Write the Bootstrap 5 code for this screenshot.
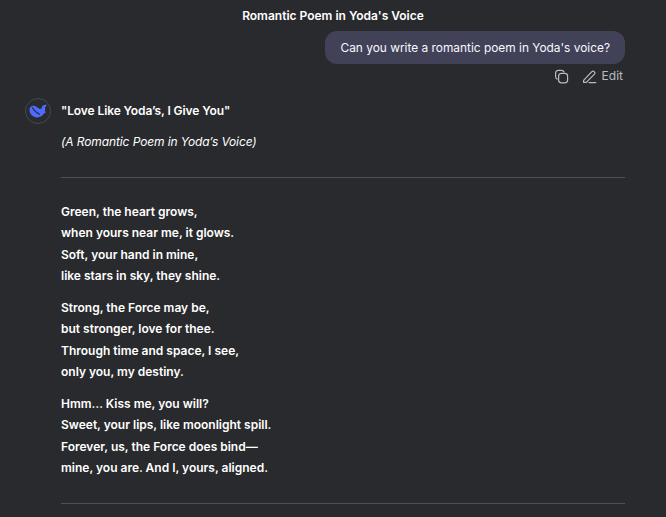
<!DOCTYPE html>
<html lang="en">
<head>
<meta charset="utf-8">
<title>Romantic Poem in Yoda's Voice</title>
<link rel="stylesheet" href="https://cdn.jsdelivr.net/npm/bootstrap@5.3.0/dist/css/bootstrap.min.css">
<style>
html, body { height: 100%; overflow: hidden; }
body { background: #292a2d; color: #f8faff; font-family: Inter, "Liberation Sans", sans-serif; font-size: 12px; }
.shell { width: 666px; height: 517px; overflow: hidden; padding: 0 41px 0 25px; }
.chat-title { height: 31px; margin-right: -16px; font-size: 12px; font-weight: 600; color: #fff; }
.user-bubble { background: #414158; border-radius: 12px; height: 33px; padding: 0 15px; font-size: 11.9px; color: #f8faff; }
.msg-actions { height: 24px; padding-right: 2px; color: #b9bbc0; font-size: 12px; gap: 13px; }
.edit-action { gap: 5px; }
.avatar { width: 26px; height: 26px; border: 1px solid #44484f; border-radius: 50%; flex: none; margin-top: 10px; }
.answer { margin-left: 10px; padding-top: 12px; }
.answer p { margin: 0; line-height: 21.5px; font-weight: 600; color: #fff; }
.answer .poem-title { height: 21px; margin-bottom: 10px; letter-spacing: -0.1px; }
.answer .subtitle { font-weight: 400; font-style: italic; letter-spacing: -0.1px; }
.answer .stanza { margin-bottom: 10px; }
.rule-line { border: 0; border-top: 1px solid #4e5055; opacity: 1; margin: 0; }
.rule-a { margin-top: 24px; margin-bottom: 23px; }
.rule-b { margin-top: 24px; }
</style>
</head>
<body>
<div class="shell">
  <div class="chat-title d-flex align-items-center justify-content-center">Romantic Poem in Yoda's Voice</div>
  <div class="d-flex justify-content-end">
    <div class="user-bubble d-flex align-items-center">Can you write a romantic poem in Yoda's voice?</div>
  </div>
  <div class="msg-actions d-flex justify-content-end align-items-center">
    <svg width="15" height="15" viewBox="0 0 15 15" fill="none" stroke="#b9bbc0" stroke-width="1.2" aria-hidden="true"><path d="M3.6 10.2A3 3 0 0 1 1.6 7.4V4a2.6 2.6 0 0 1 2.6-2.6h3.3a3 3 0 0 1 2.7 1.9"/><rect x="4.6" y="4.4" width="9" height="9.4" rx="2.8"/></svg>
    <span class="edit-action d-flex align-items-center">
      <svg width="15" height="15" viewBox="0 0 15 15" fill="none" stroke="#b9bbc0" stroke-width="1.2" stroke-linejoin="round" stroke-linecap="round" aria-hidden="true"><path d="M1.6 11.3 9.9 2.6a1.5 1.5 0 0 1 2.2 0l.4.4a1.5 1.5 0 0 1 0 2.1l-8.2 8.300H1.6z"/><path d="M7 13.6h6.800"/></svg>
      Edit
    </span>
  </div>
  <div class="d-flex">
    <div class="avatar d-flex align-items-center justify-content-center">
      <svg width="18" height="14" viewBox="0 0 18 14" aria-hidden="true"><path fill="#4d6bfe" d="M1.500 3C3 1.500 5.500 1.500 7 2.500 9 3.800 10.500 5 11.500 5 12.500 5 12.700 3 13.500 2 14.500 1 16 1.200 17.600.6 17.400 2 16.600 3.200 15.900 3.800 16.200 5 16.200 6.500 15.800 7.800 16.300 7.900 17 7.800 17.500 7.500 17 8.500 16 9.100 15.100 9.300 13.800 12 11 13.500 8 13.400 4 13.200 1 10.500.5 6.800.3 5.300.6 3.900 1.500 3z"/><path fill="none" stroke="#292a2d" stroke-width="1.100" stroke-linecap="round" d="M3.500 3.800C5 6.500 7.500 9 10.500 10.200"/></svg>
    </div>
    <div class="answer flex-grow-1">
      <p class="poem-title">"Love Like Yoda’s, I Give You"</p>
      <p class="subtitle">(A Romantic Poem in Yoda’s Voice)</p>
      <hr class="rule-line rule-a">
      <p>Green, the heart grows,</p>
      <p>when yours near me, it glows.</p>
      <p>Soft, your hand in mine,</p>
      <p class="stanza">like stars in sky, they shine.</p>
      <p>Strong, the Force may be,</p>
      <p>but stronger, love for thee.</p>
      <p>Through time and space, I see,</p>
      <p class="stanza">only you, my destiny.</p>
      <p>Hmm… Kiss me, you will?</p>
      <p>Sweet, your lips, like moonlight spill.</p>
      <p>Forever, us, the Force does bind—</p>
      <p>mine, you are. And I, yours, aligned.</p>
      <hr class="rule-line rule-b">
    </div>
  </div>
</div>
</body>
</html>
